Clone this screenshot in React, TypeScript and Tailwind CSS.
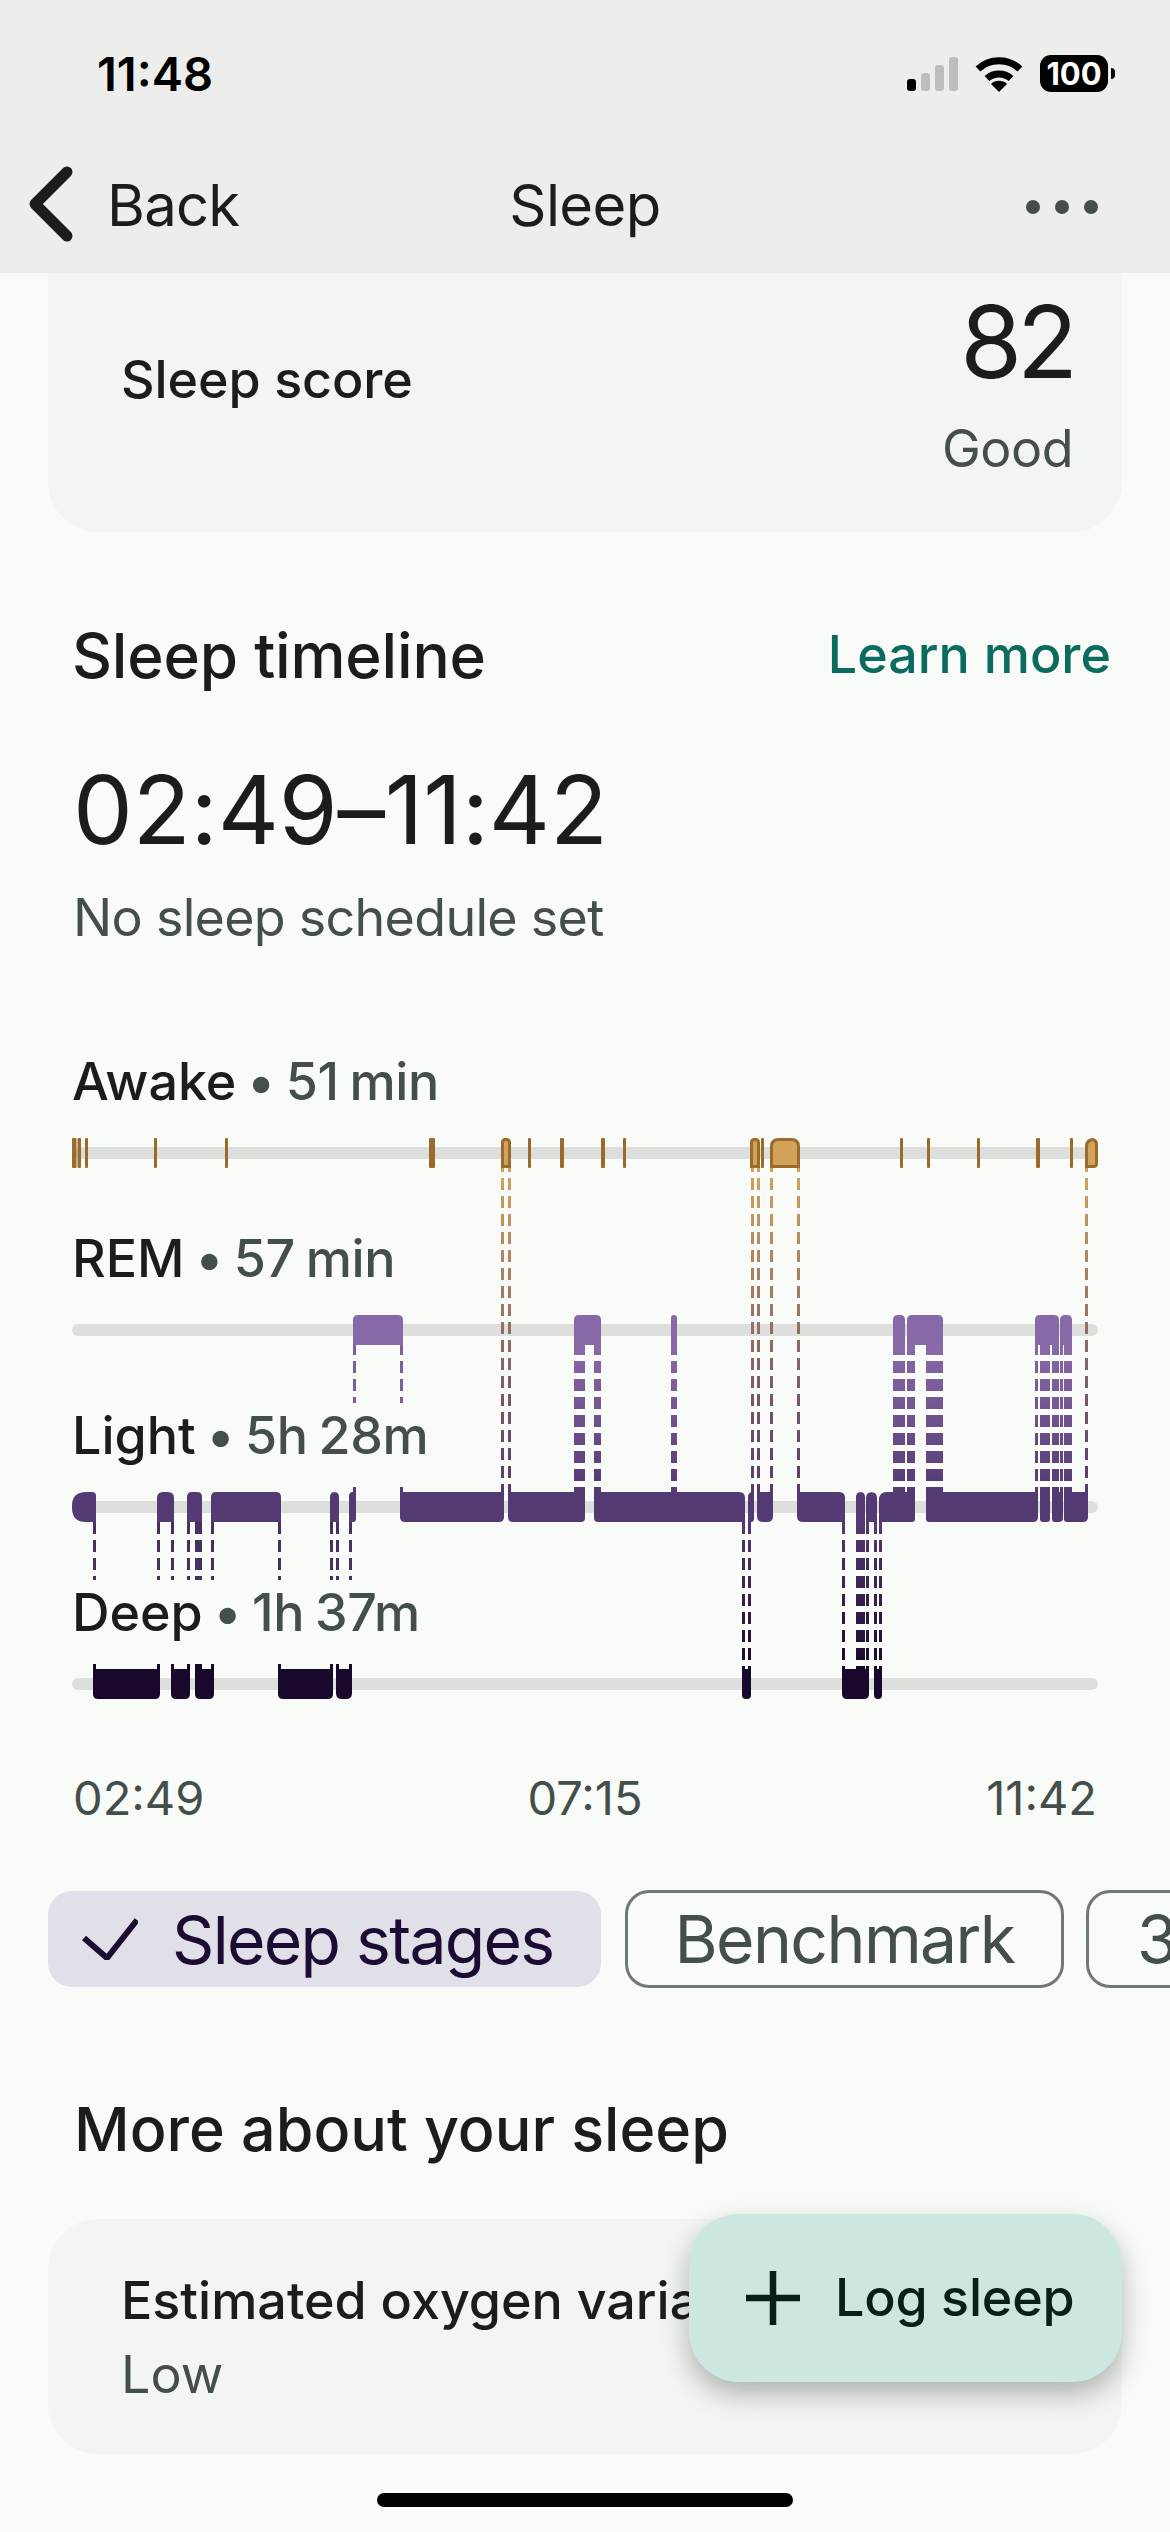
const bg = "#f9fbf8";

// [x0, x1] in page pixels, chart drawn in page coordinates
const awakeTicks = [
  [72, 76.5], [77.5, 81], [85, 88], [154, 157], [225, 228], [429, 435], [528, 531], [560, 564],
  [601, 605], [623, 626], [761, 764], [900, 903], [927, 930], [977, 980], [1036, 1040], [1070, 1073],
];

// x0, x1, tl, tr, br, bl
type Seg = [number, number, number, number, number, number];

const remSegs: Seg[] = [
  [353, 403, 5, 5, 0, 0], [574, 601, 5, 5, 0, 0], [671, 677, 3, 3, 0, 0], [893, 905, 5, 5, 0, 0],
  [907, 943, 5, 5, 0, 0], [1035, 1059, 5, 5, 0, 0], [1060, 1072, 5, 5, 0, 0],
];

const lightSegs: Seg[] = [
  [72, 96, 14, 4, 0, 14], [157, 174, 6, 6, 0, 0], [187, 202, 5, 5, 0, 0], [211, 281, 5, 5, 0, 0],
  [330, 339, 5, 5, 0, 0], [349, 356, 4, 0, 3, 0], [400, 504, 0, 0, 5, 5], [508, 585, 0, 0, 4, 5],
  [594, 745, 0, 6, 0, 4], [748, 754, 5, 0, 3, 0], [757, 773, 0, 0, 6, 6], [797, 845, 0, 6, 0, 6],
  [856, 865, 5, 5, 0, 0], [866, 877, 6, 6, 0, 0], [879, 915, 8, 0, 3, 0], [926, 1038, 0, 0, 5, 3],
  [1040, 1050, 0, 0, 3, 3], [1052, 1063, 0, 0, 4, 3], [1064, 1088, 0, 0, 5, 3],
];

const deepSegs: Seg[] = [
  [93, 160, 0, 0, 5, 5], [171, 190, 0, 0, 5, 5], [195, 214, 0, 0, 5, 5], [278, 333, 0, 0, 5, 5],
  [336, 352, 0, 0, 6, 6], [742, 751, 0, 0, 4, 4], [842, 869, 0, 0, 5, 5], [874, 882, 0, 0, 4, 4],
];

const awakeToLight = [[501, 504], [508, 511], [751, 754], [757, 760], [770, 773], [797, 800], [1085, 1088]];
const remToLightShort = [[353, 356], [400, 403]];
const remToLight = [
  [574, 585], [594, 601], [671, 677], [893, 905], [907, 915], [926, 943],
  [1035, 1038], [1040, 1050], [1052, 1059], [1060, 1063], [1064, 1072],
];
const lightToDeepShort = [
  [93, 96], [157, 160], [171, 174], [187, 190], [195, 202], [211, 214], [278, 281],
  [330, 333], [336, 339], [349, 352],
];
const lightToDeep = [[742, 745], [748, 751], [842, 845], [856, 865], [866, 869], [874, 877], [879, 882]];

function segPath(x0: number, x1: number, y0: number, y1: number, tl: number, tr: number, br: number, bl: number) {
  return `M${x0 + tl} ${y0}H${x1 - tr}Q${x1} ${y0} ${x1} ${y0 + tr}V${y1 - br}Q${x1} ${y1} ${x1 - br} ${y1}H${x0 + bl}Q${x0} ${y1} ${x0} ${y1 - bl}V${y0 + tl}Q${x0} ${y0} ${x0 + tl} ${y0}Z`;
}

function Bars({ segs, y0, y1, fill }: { segs: Seg[]; y0: number; y1: number; fill: string }) {
  return (
    <>
      {segs.map(([a, b, tl, tr, br, bl]) => (
        <path key={a} d={segPath(a, b, y0, y1, tl, tr, br, bl)} fill={fill} />
      ))}
    </>
  );
}

function Dashes({ xs, y0, y1, offset, stroke }: { xs: number[][]; y0: number; y1: number; offset: number; stroke: string }) {
  return (
    <>
      {xs.map(([a, b]) => (
        <line
          key={a}
          x1={(a + b) / 2}
          x2={(a + b) / 2}
          y1={y0}
          y2={y1}
          stroke={stroke}
          strokeWidth={b - a}
          strokeDasharray="12 6"
          strokeDashoffset={offset}
        />
      ))}
    </>
  );
}

function SleepChart() {
  return (
    <svg className="absolute inset-0" width="1170" height="680" viewBox="0 1040 1170 680">
      <defs>
        <linearGradient id="awakeLight" gradientUnits="userSpaceOnUse" x1="0" x2="0" y1="1168" y2="1492">
          <stop offset="0" stopColor="#d4a35a" />
          <stop offset="1" stopColor="#54396f" />
        </linearGradient>
        <linearGradient id="remLight" gradientUnits="userSpaceOnUse" x1="0" x2="0" y1="1345" y2="1492">
          <stop offset="0" stopColor="#8a6aa9" />
          <stop offset="1" stopColor="#543a72" />
        </linearGradient>
        <linearGradient id="lightDeep" gradientUnits="userSpaceOnUse" x1="0" x2="0" y1="1522" y2="1669">
          <stop offset="0" stopColor="#543a72" />
          <stop offset="1" stopColor="#18082b" />
        </linearGradient>
      </defs>

      {[1147, 1324, 1501, 1678].map((y) => (
        <rect key={y} x="72" y={y} width="1026" height="12" rx="6" fill="#dedfdd" />
      ))}

      <Dashes xs={awakeToLight} y0={1168} y1={1500} offset={8} stroke="url(#awakeLight)" />
      <Dashes xs={remToLight} y0={1345} y1={1499} offset={2} stroke="url(#remLight)" />
      <Dashes xs={remToLightShort} y0={1345} y1={1403} offset={2} stroke="#7e5f9e" />
      <Dashes xs={remToLightShort} y0={1487} y1={1497} offset={0} stroke="#543a72" />
      <Dashes xs={lightToDeep} y0={1522} y1={1677} offset={0} stroke="url(#lightDeep)" />
      <Dashes xs={lightToDeepShort} y0={1522} y1={1580} offset={0} stroke="#46305f" />
      <Dashes xs={lightToDeepShort} y0={1664} y1={1674} offset={0} stroke="#18082b" />

      {awakeTicks.map(([a, b]) => (
        <rect key={a} x={a} y="1138" width={b - a} height="30" rx="1" fill="#9a6b2c" />
      ))}
      <path d={segPath(502.5, 509.5, 1139.5, 1166.5, 3, 3, 0, 0)} fill="#d4a35a" stroke="#9a6b2c" strokeWidth="3" />
      <path d={segPath(751.5, 758.5, 1139.5, 1166.5, 3, 3, 0, 0)} fill="#d4a35a" stroke="#9a6b2c" strokeWidth="3" />
      <path d={segPath(771.5, 798.5, 1139.5, 1166.5, 7, 7, 0, 0)} fill="#d4a35a" stroke="#9a6b2c" strokeWidth="3" />
      <path d={segPath(1086.5, 1096.5, 1139.5, 1166.5, 7, 5, 3, 0)} fill="#d4a35a" stroke="#9a6b2c" strokeWidth="3" />

      <Bars segs={remSegs} y0={1315} y1={1345} fill="#8869a8" />
      <Bars segs={lightSegs} y0={1492} y1={1522} fill="#543a72" />
      <Bars segs={deepSegs} y0={1669} y1={1699} fill="#18082b" />
    </svg>
  );
}

const stages = [
  { name: "Awake", value: "51 min" },
  { name: "REM", value: "57 min" },
  { name: "Light", value: "5h 28m" },
  { name: "Deep", value: "1h 37m" },
];

export default function App() {
  return (
    <div
      className="relative flex h-[2532px] w-[1170px] flex-col overflow-hidden font-['Inter',sans-serif] text-[#1b1d1b]"
      style={{ backgroundColor: bg }}
    >
      {/* status bar + nav */}
      <header className="relative z-10 h-[273px] shrink-0 bg-[#edeeec]">
        <div className="flex h-[148px] items-start justify-between pl-[97px] pr-[55px] pt-[46px]">
          <span className="text-[47px] font-semibold leading-[56px] text-black">11:48</span>
          <div className="mt-[9px] flex items-center">
            <div className="flex items-end gap-[5px]">
              <div className="h-[12px] w-[9px] rounded-[3px] bg-black" />
              <div className="h-[18px] w-[9px] rounded-[3px] bg-[#bdbdbd]" />
              <div className="h-[26px] w-[9px] rounded-[3px] bg-[#bdbdbd]" />
              <div className="h-[34px] w-[9px] rounded-[3px] bg-[#bdbdbd]" />
            </div>
            <svg className="ml-[17px]" width="48" height="36" viewBox="0 0 48 36">
              <path d="M3 13A31 31 0 0 1 45 13" fill="none" stroke="#000" strokeWidth="7" />
              <path d="M12 22.5A18 18 0 0 1 36 22.5" fill="none" stroke="#000" strokeWidth="7" />
              <path d="M24 36L16 28A11.5 11.5 0 0 1 32 28Z" fill="#000" />
            </svg>
            <div className="ml-[17px] flex h-[37px] w-[68px] items-center justify-center rounded-[11px] bg-black text-[31px] font-bold leading-none text-white">
              100
            </div>
            <div className="ml-[3px] h-[11px] w-[4px] rounded-r-full bg-black" />
          </div>
        </div>
        <nav className="relative flex h-[125px] items-start justify-between pr-[72px] pl-[28px]">
          <div className="flex items-center">
            <svg width="46" height="76" viewBox="0 0 46 76" className="mt-[16px]">
              <path d="M39 6L7 38L39 70" fill="none" stroke="#1b1d1b" strokeWidth="11" strokeLinecap="round" strokeLinejoin="round" />
            </svg>
            <span className="ml-[33px] mt-[19px] text-[58px] leading-[76px] tracking-[-0.8px]">Back</span>
          </div>
          <span className="absolute left-1/2 top-[19px] -translate-x-1/2 text-[58px] leading-[76px] tracking-[-0.6px]">Sleep</span>
          <div className="mt-[52px] flex gap-[15px]">
            <div className="size-[14px] rounded-full bg-[#444e4a]" />
            <div className="size-[14px] rounded-full bg-[#444e4a]" />
            <div className="size-[14px] rounded-full bg-[#444e4a]" />
          </div>
        </nav>
      </header>

      <main className="flex flex-col">
        {/* score card */}
        <section className="mx-[48px] flex h-[259px] items-start justify-between rounded-b-[50px] bg-[#f3f5f2] pl-[73px] pr-[49px]">
          <span className="mt-[75px] text-[52px] font-medium leading-[64px] tracking-[-0.1px]">Sleep score</span>
          <div className="flex flex-col items-end">
            <span className="mt-[9px] text-[100px] leading-[120px] tracking-[-5px]">82</span>
            <span className="mt-[15px] text-[52px] leading-[64px] tracking-[-0.5px] text-[#444e4a]">Good</span>
          </div>
        </section>

        <div className="mt-[88px] flex h-[70px] items-center justify-between pl-[72px] pr-[59px]">
          <h2 className="text-[62px] font-medium tracking-[-0.2px]">Sleep timeline</h2>
          <span className="text-[52px] font-medium text-[#0b6b5c]">Learn more</span>
        </div>
        <div className="mt-[65px] h-[110px] pl-[73px] text-[95px] leading-[110px] tracking-[-0.2px]">02:49–11:42</div>
        <div className="mt-[23px] h-[60px] pl-[73px] text-[52px] leading-[60px] tracking-[-0.7px] text-[#444e4a]">No sleep schedule set</div>

        {/* timeline */}
        <div className="relative mt-[92px] h-[680px] pl-[72px]">
          <SleepChart />
          <div className="relative flex flex-col">
            {stages.map((s) => (
              <div key={s.name} className="h-[177px] pt-[12px] text-[52px] font-medium leading-[60px] [word-spacing:-2.5px]">
                {s.name}
                <span className="tracking-[-0.4px] text-[#444e4a]"> • {s.value}</span>
              </div>
            ))}
          </div>
        </div>

        <div className="mt-[43px] grid h-[60px] grid-cols-3 items-center pl-[73px] pr-[73px] text-[47px] text-[#444e4a]">
          <span>02:49</span>
          <span className="text-center">07:15</span>
          <span className="text-right">11:42</span>
        </div>

        {/* chips */}
        <div className="mt-[67px] flex h-[98px] items-center overflow-hidden pl-[48px]">
          <div className="flex h-[96px] w-[553px] shrink-0 items-center rounded-[24px] bg-[#e1e0e8] pl-[34px] text-[#1c0b33]">
            <svg width="56" height="42" viewBox="0 0 56 42">
              <path d="M2 20L25 40L55 2" fill="none" stroke="#1c0b33" strokeWidth="6" />
            </svg>
            <span className="ml-[34px] mt-[2px] text-[66px] leading-none tracking-[-1.7px]">Sleep stages</span>
          </div>
          <div className="ml-[24px] flex h-[98px] w-[439px] shrink-0 items-center justify-center rounded-[24px] border-[3px] border-[#6f7974] text-[66px] tracking-[-1.6px] text-[#444e4a]">
            Benchmark
          </div>
          <div className="ml-[22px] flex h-[98px] shrink-0 items-center rounded-[24px] border-[3px] border-[#6f7974] px-[48px] text-[66px] text-[#444e4a]">
            30-day
          </div>
        </div>

        <h2 className="mt-[106px] h-[70px] pl-[74px] text-[61px] font-medium leading-[70px]">More about your sleep</h2>

        <section className="mx-[48px] mt-[55px] h-[235px] rounded-[50px] bg-[#f3f5f2] pl-[73px] pt-[52px]">
          <div className="text-[52px] font-medium leading-[60px] whitespace-nowrap">Estimated oxygen variation</div>
          <div className="mt-[14px] text-[52px] leading-[60px] text-[#444e4a]">Low</div>
        </section>
      </main>

      {/* floating action */}
      <button className="absolute left-[689px] top-[2214px] flex h-[168px] w-[433px] items-center rounded-[50px] bg-[#cce7e0] pl-[57px] shadow-[0_12px_28px_rgba(0,0,0,0.28)]">
        <svg width="54" height="54" viewBox="0 0 54 54">
          <path d="M27 0V54M0 27H54" stroke="#062018" strokeWidth="6.5" />
        </svg>
        <span className="ml-[35px] text-[52px] font-medium tracking-[-0.2px] text-[#062018]">Log sleep</span>
      </button>

      <div className="absolute left-[377px] top-[2493px] h-[14px] w-[416px] rounded-full bg-black" />
    </div>
  );
}
